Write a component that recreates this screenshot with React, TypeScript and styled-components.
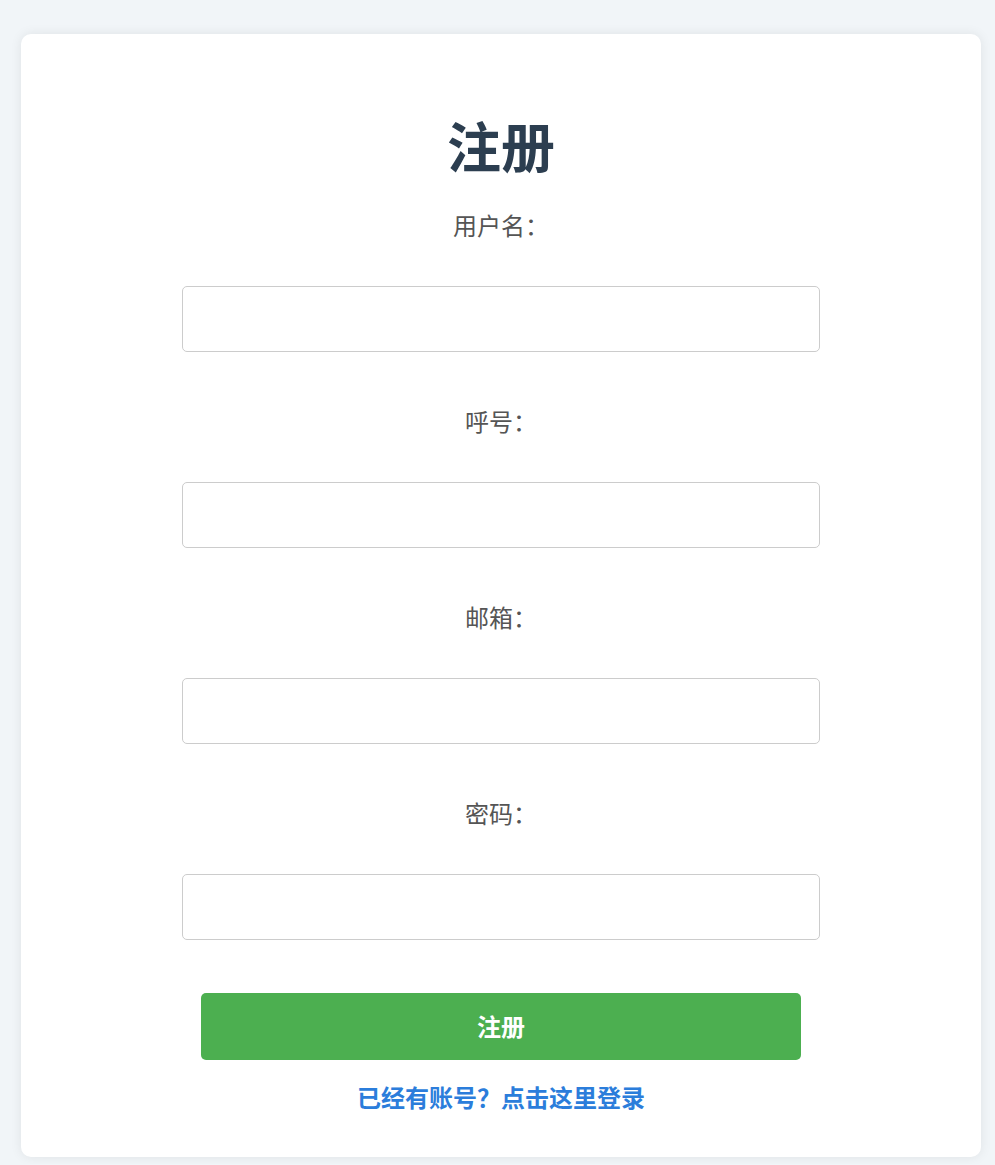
import React from "react";
import styled, { createGlobalStyle } from "styled-components";

const GlobalStyle = createGlobalStyle`
  html, body {
    margin: 0;
    padding: 0;
    background: #f1f5f8;
    font-family: "Noto Sans CJK SC", "Noto Sans", sans-serif;
  }
  * { box-sizing: border-box; }
`;

const Page = styled.div`
  padding: 34px 14px 7px 21px;
`;

const Card = styled.div`
  width: 960px;
  background: #ffffff;
  border-radius: 10px;
  box-shadow: 0 0 12px rgba(0, 0, 0, 0.08);
  padding: 79px 0 44px;
  display: flex;
  flex-direction: column;
  align-items: center;
`;

const Title = styled.h1`
  margin: 0;
  font-size: 54px;
  line-height: 64px;
  font-weight: 700;
  color: #2c3e50;
  text-align: center;
`;

const Form = styled.form`
  display: flex;
  flex-direction: column;
  align-items: center;
  width: 638px;
  margin-top: 32px;
`;

const Field = styled.div<{ $first?: boolean }>`
  display: flex;
  flex-direction: column;
  align-items: center;
  width: 100%;
  margin-top: ${(p) => (p.$first ? "0" : "53px")};
`;

const Label = styled.label`
  font-size: 24px;
  line-height: 32px;
  color: #555555;
  margin-bottom: 45px;
  text-align: center;
`;

const Input = styled.input`
  width: 638px;
  height: 66px;
  border: 1px solid #cccccc;
  border-radius: 5px;
  padding: 0 12px;
  font-size: 20px;
  outline: none;
  background: #fff;
`;

const Button = styled.button`
  width: 600px;
  height: 67px;
  margin-top: 53px;
  border: none;
  border-radius: 5px;
  background: #4caf50;
  color: #ffffff;
  font-family: inherit;
  font-size: 24px;
  font-weight: 700;
  padding: 0 0 2px;
  cursor: pointer;
`;

const LinkText = styled.a`
  margin-top: 21px;
  font-size: 24px;
  line-height: 32px;
  font-weight: 700;
  color: #2b7ddb;
  text-decoration: none;
`;

const fields = [
  { id: "username", label: "用户名：", type: "text" },
  { id: "callsign", label: "呼号：", type: "text" },
  { id: "email", label: "邮箱：", type: "email" },
  { id: "password", label: "密码：", type: "password" },
];

export default function App() {
  return (
    <>
      <GlobalStyle />
      <Page>
        <Card>
          <Title>注册</Title>
          <Form onSubmit={(e) => e.preventDefault()}>
            {fields.map((f, i) => (
              <Field key={f.id} $first={i === 0}>
                <Label htmlFor={f.id}>{f.label}</Label>
                <Input id={f.id} type={f.type} />
              </Field>
            ))}
            <Button type="submit">注册</Button>
            <LinkText href="#">已经有账号？点击这里登录</LinkText>
          </Form>
        </Card>
      </Page>
    </>
  );
}
